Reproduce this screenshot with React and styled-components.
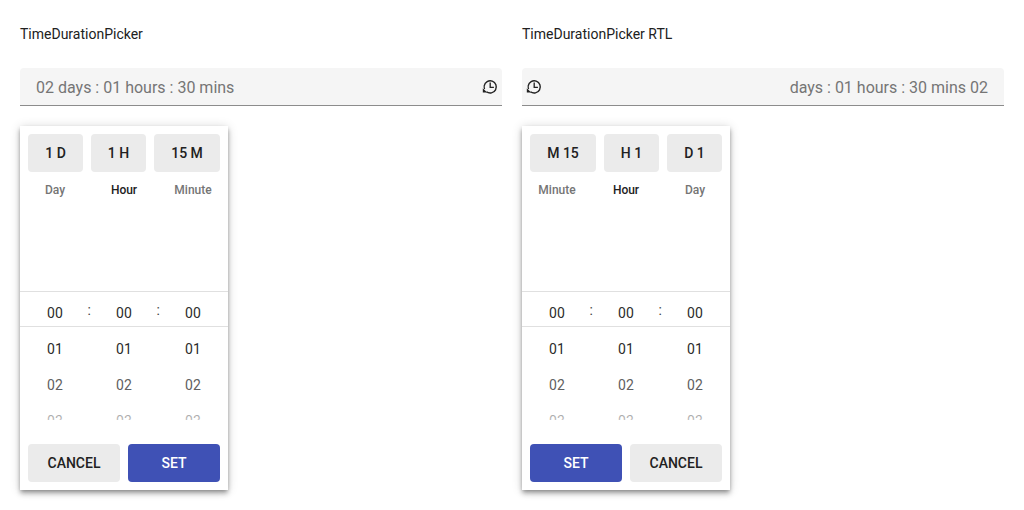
import React from "react";
import styled, { createGlobalStyle } from "styled-components";

const GlobalStyle = createGlobalStyle`
  body {
    margin: 0;
    background: #fff;
    font-family: Roboto, "Liberation Sans", sans-serif;
    color: #212121;
  }
`;

const Page = styled.div`
  display: grid;
  grid-template-columns: 482px 482px;
  column-gap: 20px;
  padding: 25px 20px 20px;
`;

const Title = styled.div`
  font-size: 14px;
  line-height: 18px;
  height: 43px;
  color: #212121;
`;

const Field = styled.div`
  display: flex;
  flex-direction: ${(p) => (p.$rtl ? "row-reverse" : "row")};
  align-items: center;
  justify-content: space-between;
  height: 37px;
  padding: ${(p) => (p.$rtl ? "0 16px 0 4px" : "0 4px 0 16px")};
  background: #f5f5f5;
  border-bottom: 1px solid #8c8c8c;
  border-radius: 4px 4px 0 0;
`;

const FieldText = styled.span`
  font-size: 16px;
  line-height: 20px;
  padding-top: 2px;
  color: #757575;
`;

const IconWrap = styled.span`
  display: flex;
  width: 16px;
  height: 16px;
`;

const Panel = styled.div`
  width: 208px;
  height: 364px;
  margin-top: 20px;
  background: #fff;
  box-shadow: 0 2px 4px -1px rgba(0, 0, 0, 0.3), 0 4px 5px 0 rgba(0, 0, 0, 0.2),
    0 1px 10px 0 rgba(0, 0, 0, 0.16);
  display: flex;
  flex-direction: column;
`;

const Presets = styled.div`
  display: flex;
  justify-content: space-between;
  padding: 8px 8px 0;
`;

const Preset = styled.button`
  height: 38px;
  padding: 0;
  width: ${(p) => p.$w}px;
  border: 0;
  border-radius: 4px;
  background: #ebebeb;
  font-family: inherit;
  font-size: 14px;
  font-weight: 455;
  letter-spacing: 0;
  color: #212121;
`;

const Heads = styled.div`
  display: grid;
  grid-template-columns: repeat(3, 69px);
  padding: 9px 0 0 0;
  justify-content: center;
`;

const Head = styled.div`
  text-align: center;
  font-size: 12px;
  line-height: 18px;
  font-weight: 500;
  color: ${(p) => (p.$active ? "#212121" : "#757575")};
`;

const Wheel = styled.div`
  position: relative;
  margin-top: 92px;
  height: 128px;
  display: grid;
  grid-template-columns: repeat(3, 69px);
  justify-content: center;
  overflow: hidden;
  border-top: 1px solid #e0e0e0;
`;

const Band = styled.div`
  position: absolute;
  left: 0;
  right: 0;
  top: 34px;
  border-top: 1px solid #e0e0e0;
`;

const Sep = styled.span`
  position: absolute;
  top: 9px;
  left: ${(p) => p.$x}px;
  font-size: 14px;
  line-height: 18px;
  color: #424242;
`;

const Fade = styled.div`
  position: absolute;
  left: 0;
  right: 0;
  bottom: 0;
  height: 18px;
  background: linear-gradient(to bottom, rgba(255, 255, 255, 0.1), rgba(255, 255, 255, 0.6));
`;

const Col = styled.div`
  padding-top: 3px;
`;

const Cell = styled.div`
  height: 36px;
  line-height: 36px;
  text-align: center;
  font-size: 14px;
  letter-spacing: 0.2px;
  color: ${(p) => (p.$muted ? "#616161" : "#2b2b2b")};
`;

const Actions = styled.div`
  display: flex;
  gap: 8px;
  padding: 24px 8px 8px;
  flex-direction: ${(p) => (p.$rtl ? "row-reverse" : "row")};
`;

const ActionButton = styled.button`
  flex: 1;
  height: 38px;
  padding: 0;
  border: 0;
  border-radius: 4px;
  font-family: inherit;
  font-size: 14px;
  font-weight: 455;
  letter-spacing: 0;
  background: ${(p) => (p.$primary ? "#3f51b5" : "#ebebeb")};
  color: ${(p) => (p.$primary ? "#fff" : "#212121")};
`;

const HistoryIcon = () => (
  <svg width="16" height="16" viewBox="0 0 16 16" fill="none">
    <path d="M2.2 6.8A6.1 6.1 0 1 1 4.5 12.8" stroke="#212121" strokeWidth="1.4" />
    <path d="M0.8 9.2V13.6H5.2Z" fill="#212121" />
    <path d="M2.2 6.8Q2 8.4 2.6 10" stroke="#212121" strokeWidth="1.2" />
    <path d="M8.2 3.6V8.3H11.9" stroke="#212121" strokeWidth="1.3" />
  </svg>
);

function Picker({ title, value, rtl, presets, heads }) {
  return (
    <div>
      <Title>{title}</Title>
      <Field $rtl={rtl}>
        <FieldText>{value}</FieldText>
        <IconWrap>
          <HistoryIcon />
        </IconWrap>
      </Field>
      <Panel>
        <Presets>
          {presets.map((p) => (
            <Preset key={p.label} $w={p.w}>{p.label}</Preset>
          ))}
        </Presets>
        <Heads>
          {heads.map((h) => (
            <Head key={h} $active={h === "Hour"}>{h}</Head>
          ))}
        </Heads>
        <Wheel>
          <Band />
          <Sep $x={67.5}>:</Sep>
          <Sep $x={136.5}>:</Sep>
          {[0, 1, 2].map((c) => (
            <Col key={c}>
              <Cell>00</Cell>
              <Cell>01</Cell>
              <Cell $muted>02</Cell>
              <Cell $muted>03</Cell>
            </Col>
          ))}
          <Fade />
        </Wheel>
        <Actions $rtl={rtl}>
          <ActionButton>CANCEL</ActionButton>
          <ActionButton $primary>SET</ActionButton>
        </Actions>
      </Panel>
    </div>
  );
}

export default function App() {
  return (
    <>
      <GlobalStyle />
      <Page>
        <Picker
          title="TimeDurationPicker"
          value="02 days : 01 hours : 30 mins"
          presets={[
            { label: "1 D", w: 55 },
            { label: "1 H", w: 55 },
            { label: "15 M", w: 66 },
          ]}
          heads={["Day", "Hour", "Minute"]}
        />
        <Picker
          rtl
          title="TimeDurationPicker RTL"
          value="days : 01 hours : 30 mins 02"
          presets={[
            { label: "M 15", w: 66 },
            { label: "H 1", w: 55 },
            { label: "D 1", w: 55 },
          ]}
          heads={["Minute", "Hour", "Day"]}
        />
      </Page>
    </>
  );
}
